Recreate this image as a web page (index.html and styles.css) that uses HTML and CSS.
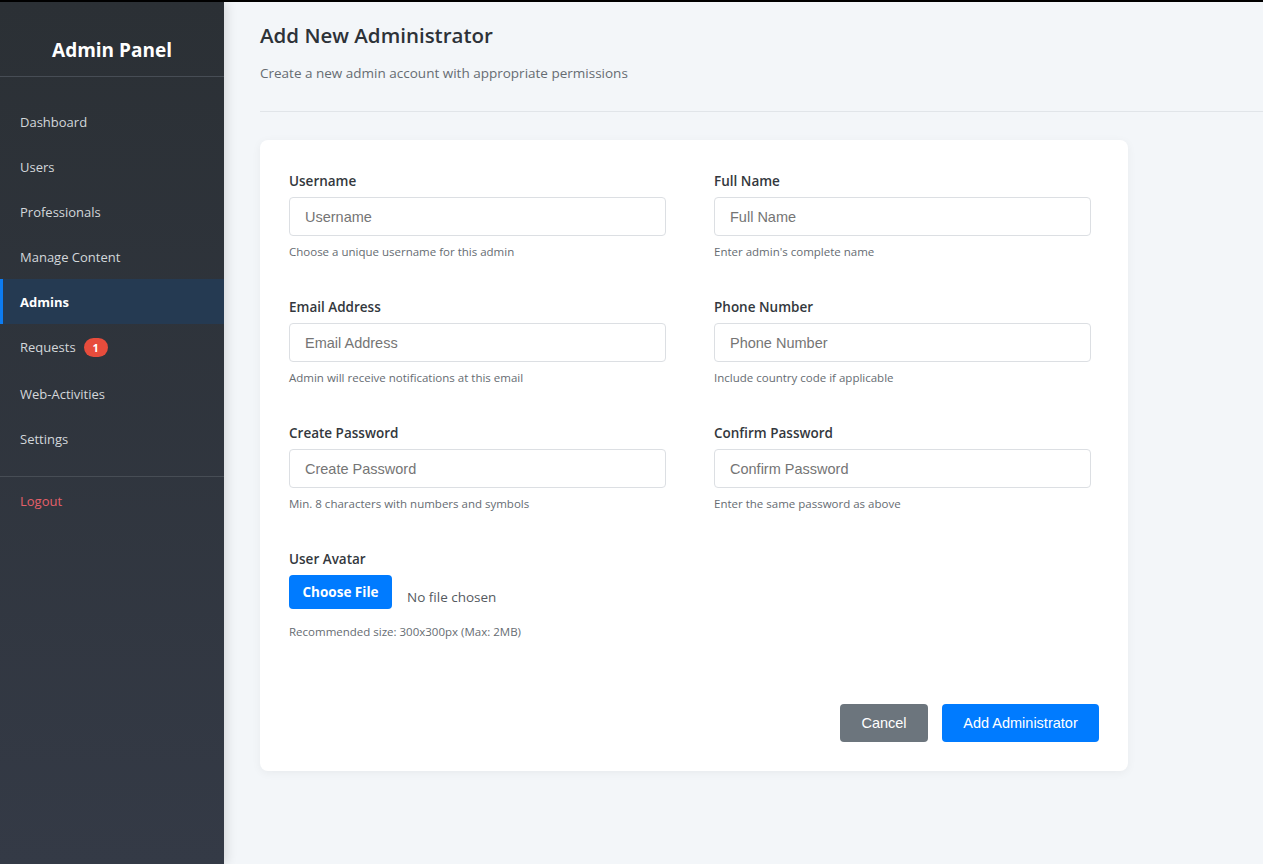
FILE: index.html
```html
<!DOCTYPE html>
<html lang="en">
<head>
<meta charset="utf-8">
<title>Add New Administrator</title>
<link rel="stylesheet" href="styles.css">
</head>
<body>
<div class="topstrip"></div>
<div class="layout">
  <aside class="sidebar">
    <div class="brand"><h2>Admin Panel</h2></div>
    <nav class="menu">
      <a class="item" href="#">Dashboard</a>
      <a class="item" href="#">Users</a>
      <a class="item" href="#">Professionals</a>
      <a class="item" href="#">Manage Content</a>
      <a class="item active" href="#">Admins</a>
      <a class="item item-badge" href="#">Requests <span class="badge">1</span></a>
      <a class="item" href="#">Web-Activities</a>
      <a class="item" href="#">Settings</a>
    </nav>
    <div class="menu-bottom">
      <a class="item logout" href="#">Logout</a>
    </div>
  </aside>
  <main class="main">
    <header class="page-header">
      <h1>Add New Administrator</h1>
      <p>Create a new admin account with appropriate permissions</p>
    </header>
    <section class="card">
      <form class="form">
        <div class="grid">
          <div class="field">
            <label>Username</label>
            <input type="text" placeholder="Username">
            <small>Choose a unique username for this admin</small>
          </div>
          <div class="field">
            <label>Full Name</label>
            <input type="text" placeholder="Full Name">
            <small>Enter admin's complete name</small>
          </div>
          <div class="field">
            <label>Email Address</label>
            <input type="text" placeholder="Email Address">
            <small>Admin will receive notifications at this email</small>
          </div>
          <div class="field">
            <label>Phone Number</label>
            <input type="text" placeholder="Phone Number">
            <small>Include country code if applicable</small>
          </div>
          <div class="field">
            <label>Create Password</label>
            <input type="password" placeholder="Create Password">
            <small>Min. 8 characters with numbers and symbols</small>
          </div>
          <div class="field">
            <label>Confirm Password</label>
            <input type="password" placeholder="Confirm Password">
            <small>Enter the same password as above</small>
          </div>
          <div class="field">
            <label>User Avatar</label>
            <div class="file-row">
              <span class="file-btn">Choose File</span>
              <span class="file-name">No file chosen</span>
            </div>
            <small class="file-help">Recommended size: 300x300px (Max: 2MB)</small>
          </div>
        </div>
        <div class="actions">
          <button type="button" class="btn btn-gray">Cancel</button>
          <button type="button" class="btn btn-blue">Add Administrator</button>
        </div>
      </form>
    </section>
  </main>
</div>
</body>
</html>
```
FILE: styles.css
```css
* { box-sizing: border-box; }
html, body { margin: 0; padding: 0; }
body {
  font-family: "Open Sans", "Noto Sans", sans-serif;
  background: #f3f6f9;
  color: #333;
  height: 864px;
  overflow: hidden;
}
.topstrip { height: 2px; background: #000; }
.layout { display: flex; height: 862px; }

.sidebar {
  width: 224px;
  flex: 0 0 224px;
  background: linear-gradient(180deg, #2b3035 0%, #343a46 100%);
  box-shadow: 3px 0 10px rgba(0, 0, 0, 0.12);
  position: relative;
  z-index: 1;
}
.brand {
  padding: 33px 0 11px;
  border-bottom: 1px solid #474d55;
  text-align: center;
}
.brand h2 {
  margin: 0;
  font-size: 19px;
  line-height: 30px;
  font-weight: 700;
  color: #fff;
}
.menu {
  display: flex;
  flex-direction: column;
  padding: 22px 0 15px;
  border-bottom: 1px solid #474d55;
}
.item {
  display: flex;
  align-items: center;
  height: 45px;
  padding: 0 20px 0 17px;
  font-size: 13px;
  color: #d3d7db;
  text-decoration: none;
  border-left: 3px solid transparent;
}
.item.active {
  background: #253a52;
  border-left-color: #0d7cf2;
  color: #fff;
  font-weight: 700;
}
.item-badge { height: 47px; padding-bottom: 1px; }
.badge {
  display: inline-flex;
  align-items: center;
  justify-content: center;
  margin-left: 8px;
  width: 24px;
  height: 19px;
  border-radius: 10px;
  background: #e74c3c;
  color: #fff;
  font-size: 11px;
  font-weight: 700;
}
.menu-bottom { padding-top: 1px; }
.item.logout { color: #e4606a; }

.main {
  flex: 1;
  padding-left: 36px;
}
.page-header {
  padding: 18px 0 28px;
  border-bottom: 1px solid #e1e5e9;
}
.page-header h1 {
  margin: 0;
  font-size: 20.5px;
  line-height: 30px;
  font-weight: 600;
  color: #2d3238;
}
.page-header p {
  margin: 13px 0 0;
  font-size: 13.5px;
  line-height: 20px;
  color: #666c72;
}
.card {
  margin-top: 28px;
  width: 868px;
  background: #fff;
  border-radius: 8px;
  box-shadow: 0 2px 10px rgba(0, 0, 0, 0.05);
  padding: 31px 29px 29px;
}
.grid {
  display: grid;
  grid-template-columns: 377px 377px;
  column-gap: 48px;
  row-gap: 37px;
}
.field { display: flex; flex-direction: column; }
.field label {
  font-size: 13.5px;
  line-height: 20px;
  font-weight: 600;
  color: #33383d;
  margin-bottom: 6px;
}
.field input {
  height: 39px;
  border: 1px solid #dcdfe3;
  border-radius: 4px;
  padding: 0 15px;
  font-family: "Liberation Sans", Arial, sans-serif;
  font-size: 14.5px;
  color: #333;
  background: #fff;
}
.field input::placeholder { color: #757575; }
.field small {
  margin-top: 8px;
  font-size: 11.5px;
  line-height: 16px;
  color: #666c72;
}
.file-row {
  display: flex;
  align-items: flex-start;
  height: 41px;
}
.file-btn {
  display: inline-flex;
  align-items: center;
  justify-content: center;
  width: 103px;
  height: 34px;
  background: #007bff;
  color: #fff;
  border-radius: 4px;
  font-size: 13.5px;
  font-weight: 700;
}
.file-name {
  margin-left: 15px;
  margin-top: 12px;
  font-size: 13.5px;
  line-height: 20px;
  color: #555a5f;
}
.field .file-help { margin-top: 8px; }
.actions {
  display: flex;
  justify-content: flex-end;
  gap: 14px;
  margin-top: 64px;
}
.btn {
  height: 38px;
  border: none;
  border-radius: 4px;
  font-family: "Liberation Sans", Arial, sans-serif;
  font-size: 14.5px;
  color: #fff;
  padding: 0;
}
.btn-gray { background: #6c757d; width: 88px; }
.btn-blue { background: #007bff; width: 157px; }
```
